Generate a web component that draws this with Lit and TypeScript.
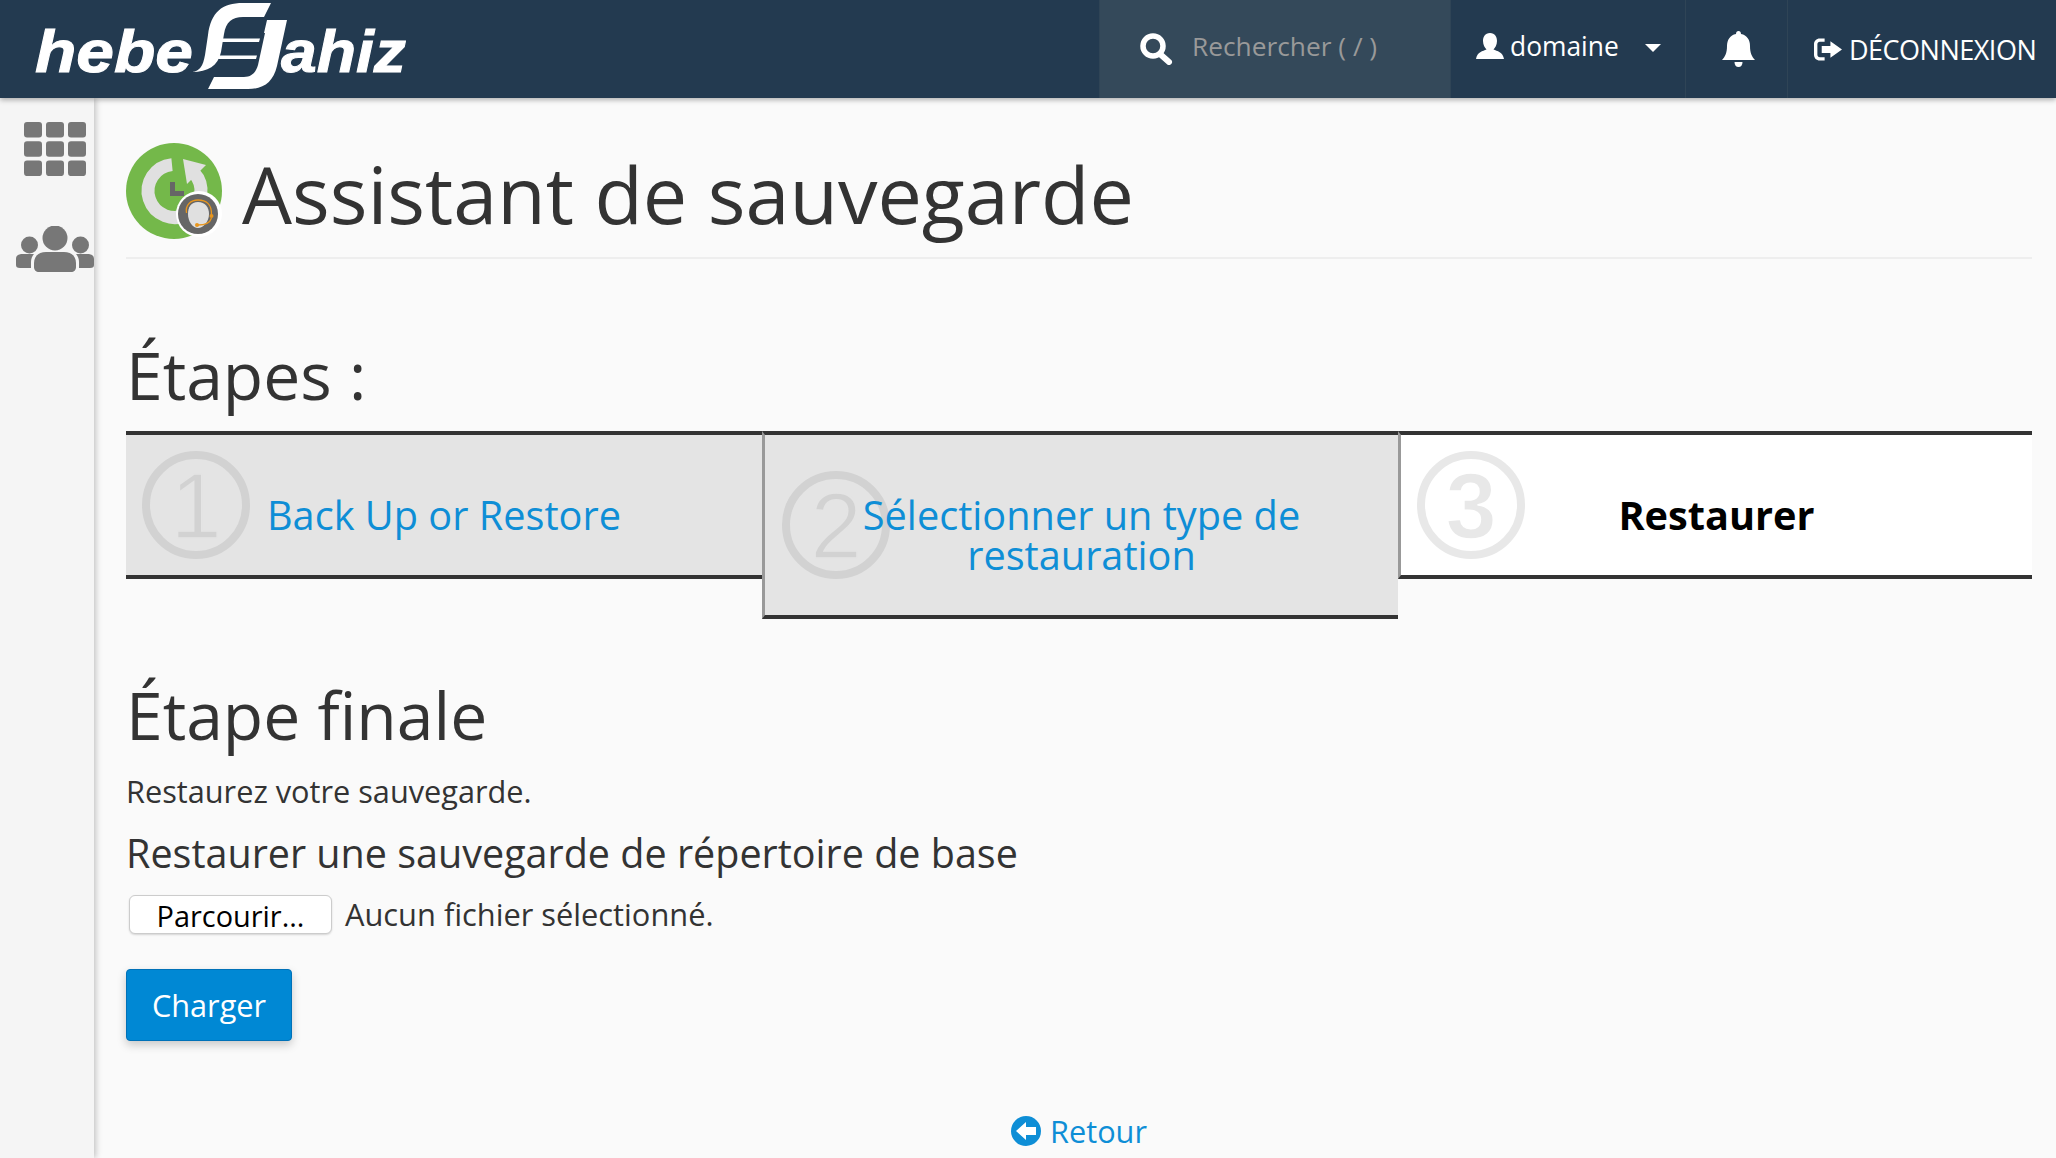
import { css, html, LitElement, svg } from 'lit';
import { customElement } from 'lit/decorators.js';

const stepBadge = (n: number, tone: string, bg: string) => html`
  <svg class="num" width="108" height="108" viewBox="0 0 108 108">
    <circle cx="54" cy="54" r="50" fill="none" stroke=${tone} stroke-width="8" />
    <text x="54" y="87" text-anchor="middle" fill=${tone} stroke=${bg} stroke-width="1.500" paint-order="fill" font-size="92" font-family="Liberation Sans, sans-serif">${n}</text>
  </svg>
`;

@customElement('app-root')
export class AppRoot extends LitElement {
  static override styles = css`
    :host {
      display: block;
      height: 1158px;
      overflow: hidden;
      background: #fafafa;
      font-family: 'Open Sans', sans-serif;
      color: #333;
    }

    .topbar {
      position: relative;
      z-index: 2;
      display: flex;
      align-items: stretch;
      height: 98px;
      background: #233a50;
      box-shadow: 0 2px 5px rgba(0, 0, 0, 0.3);
      color: #fff;
      font-size: 26.400px;
    }

    .logo {
      margin-left: 30px;
      margin-right: auto;
    }

    .search {
      display: flex;
      align-items: center;
      gap: 19px;
      width: 352px;
      box-sizing: border-box;
      padding: 0 0 6px 40px;
      background: #34495a;
      border-right: 1px solid #2f4456;
      border-left: 1px solid #2f4456;
      color: #999;
      font-size: 26.300px;
    }

    .search svg {
      margin-top: 6px;
    }

    .user {
      display: flex;
      align-items: center;
      width: 235px;
      box-sizing: border-box;
      padding: 0 0 6px 25px;
      border-right: 1px solid #2f4456;
      gap: 6px;
    }

    .caret {
      width: 0;
      height: 0;
      margin: 4px 0 0 20px;
      border: 8px solid transparent;
      border-top-color: #fff;
      border-bottom: 0;
    }

    .bell {
      display: flex;
      align-items: center;
      justify-content: center;
      width: 102px;
      box-sizing: border-box;
      padding-left: 3px;
      border-right: 1px solid #2f4456;
    }

    .logout {
      display: flex;
      align-items: center;
      gap: 7px;
      padding-left: 26px;
      width: 268px;
      box-sizing: border-box;
      font-size: 27px;
      letter-spacing: -0.5px;
    }

    .logout svg {
      flex: none;
    }

    .body {
      display: flex;
      height: 1060px;
    }

    .side {
      flex: none;
      width: 94px;
      display: flex;
      flex-direction: column;
      align-items: center;
      gap: 50px;
      padding: 24px 0 0 15px;
      box-sizing: border-box;
      background: #f5f5f5;
      box-shadow: 2px 0 6px rgba(0, 0, 0, 0.22);
    }

    .content {
      flex: 1;
      padding: 45px 24px 0 32px;
      min-width: 0;
    }

    .title {
      display: flex;
      align-items: center;
      gap: 20px;
      padding-bottom: 18px;
      border-bottom: 2px solid #eee;
    }

    h1 {
      margin: 5px 0 0;
      font-size: 79.100px;
      line-height: 91px;
      font-weight: 400;
    }

    .steps-title {
      margin: 70px 0 0;
      font-size: 66px;
      line-height: 90px;
      font-weight: 400;
    }

    .steps {
      display: flex;
      align-items: flex-start;
      margin-top: 12px;
    }

    .step {
      position: relative;
      flex: 0 0 636px;
      box-sizing: border-box;
      padding: 60px 0 40px;
      border-top: 4px solid #333;
      border-bottom: 4px solid #333;
      background: #e4e4e4;
      text-align: center;
      font-size: 39.700px;
      line-height: 40px;
      color: #0e8ed6;
    }

    .step + .step {
      border-left: 3px solid #999;
    }

    .step.second {
      flex-basis: 636px;
    }

    .step.current {
      flex: 1;
      background: #fff;
      color: #000;
      font-weight: 700;
    }

    .step span {
      position: relative;
    }

    .num {
      position: absolute;
      left: 16px;
      top: 16px;
    }

    .step.second .num {
      left: 17px;
      top: 36px;
    }

    h2 {
      margin: 50px 0 0;
      font-size: 66px;
      line-height: 90px;
      font-weight: 400;
    }

    .lead {
      margin: 12px 0 0;
      font-size: 30.700px;
      line-height: 40px;
    }

    h3 {
      margin: 14px 0 0;
      font-size: 39.500px;
      line-height: 56px;
      font-weight: 400;
    }

    .file {
      display: flex;
      align-items: center;
      gap: 13px;
      margin: 12px 0 0 3px;
      font-size: 30.800px;
    }

    .file button {
      width: 203px;
      height: 39px;
      padding: 0 0 2px;
      border: 1px solid #ccc;
      border-radius: 6px;
      background: #fff;
      box-shadow: 0 1px 2px rgba(0, 0, 0, 0.15);
      font: inherit;
      font-size: 28.900px;
      color: #000;
    }

    .send {
      display: block;
      width: 166px;
      height: 72px;
      margin-top: 34px;
      padding: 0;
      border: 1px solid #0071b8;
      border-radius: 4px;
      background: #0088d4;
      box-shadow: 0 4px 10px rgba(0, 0, 0, 0.2);
      color: #fff;
      font: inherit;
      font-size: 30.700px;
    }

    .back {
      display: flex;
      align-items: center;
      justify-content: center;
      gap: 9px;
      margin-top: 69px;
      font-size: 30.700px;
      color: #0e8ed6;
    }
  `;

  private _logo() {
    return html`
      <svg class="logo" width="390" height="98" viewBox="30 0 390 98" fill="#fff">
        <text x="35" y="72" textLength="158" lengthAdjust="spacingAndGlyphs" font-family="Liberation Sans, sans-serif" font-weight="700" font-style="italic" font-size="60" stroke="#fff" stroke-width="1">hebe</text>
        <text x="281" y="72" textLength="125" lengthAdjust="spacingAndGlyphs" font-family="Liberation Sans, sans-serif" font-weight="700" font-style="italic" font-size="60" stroke="#fff" stroke-width="1">ahiz</text>
        <path d="M192 72 C200 71 203 66 205 55 L208 35 C211 12 222 3 243 3 H271 L264 17 H243 C232 17 226 22 224 34 L221 52 C218 66 208 72 192 72 Z" />
        <path d="M264 33 L267 20 H287 L277 66 C273 82 264 89 248 89 H208 L214 77 H244 C252 77 256 72 258 65 L265 33 Z" />
        <path d="M222 38.500 H260 L259 42 H221 Z M219 55.500 H257 L256 59 H218 Z" />
      </svg>
    `;
  }

  private _backupIcon() {
    return html`
      <svg width="96" height="96" viewBox="0 0 96 96" style="flex:none">
        <circle cx="48" cy="48" r="48" fill="#74b84a" />
        <path d="M46 21.600 A26.500 26.500 0 1 0 68 30" fill="none" stroke="#e0e0e0" stroke-width="13" />
        <path d="M57 16 L80 22 L61 41 Z" fill="#e0e0e0" />
        <path d="M44 39 H49 V48 H58 V53 H44 Z" fill="#666" />
        <circle cx="73" cy="71" r="23" fill="#fff" />
        <circle cx="72" cy="71" r="20" fill="#666" />
        <path d="M72 59 C79 59 83 64 83 71 C83 79 77 85 72 85 C67 85 62 79 62 71 C62 64 65 59 72 59 Z" fill="#e0e0e0" />
        <path d="M60.500 70 C59 62 65 57 72 57 C80 57 86 61 85.500 72 M85.500 75 C84 80 78 82 72 82" fill="none" stroke="#e8961e" stroke-width="1.300" />
        <circle cx="85.500" cy="73" r="2" fill="#e8961e" />
        <circle cx="71" cy="82" r="2" fill="#e8961e" />
      </svg>
    `;
  }

  private _grid() {
    const cells = [];
    for (let r = 0; r < 3; r++) {
      for (let c = 0; c < 3; c++) {
        cells.push(svg`<rect x=${c * 22} y=${r * 19.3} width="18" height="15.500" rx="3" />`);
      }
    }
    return html`<svg width="62" height="54" viewBox="0 0 62 54" fill="#777">${cells}</svg>`;
  }

  protected override render() {
    return html`
      <div class="topbar">
        ${this._logo()}
        <div class="search">
          <svg width="33" height="32" viewBox="0 0 33 32" fill="none" stroke="#fff">
            <circle cx="13" cy="13" r="10" stroke-width="5.500" />
            <path d="M20 21 L29 29" stroke-width="6" stroke-linecap="round" />
          </svg>
          <span>Rechercher ( / )</span>
        </div>
        <div class="user">
          <svg width="28" height="26" viewBox="0 0 28 26" fill="#fff">
            <path d="M14 0 C19 0 21 4 21 8 C21 12 19 15 17.500 16.500 C21 18 27 19 28 26 H0 C1 19 7 18 10.500 16.500 C9 15 7 12 7 8 C7 4 9 0 14 0 Z" />
          </svg>
          <span>domaine</span>
          <i class="caret"></i>
        </div>
        <div class="bell">
          <svg width="33" height="36" viewBox="0 0 33 36" fill="#fff">
            <path d="M16.500 0 C18 0 19 1 19 3 C25 4 28 9 28 15 C28 22 30 26 33 29 H0 C3 26 5 22 5 15 C5 9 8 4 14 3 C14 1 15 0 16.500 0 Z" />
            <path d="M12.500 31 H20.500 C20.500 34 19 36 16.500 36 C14 36 12.500 34 12.500 31 Z" />
          </svg>
        </div>
        <div class="logout">
          <svg width="28" height="23" viewBox="0 0 29 23" fill="#fff">
            <path d="M11 0 V3.500 H6 C4.500 3.500 3.500 4.500 3.500 6 V17 C3.500 18.500 4.500 19.500 6 19.500 H11 V23 H6 C2.500 23 0 20.500 0 17 V6 C0 2.500 2.500 0 6 0 Z" />
            <path d="M17 3 L29 11.500 L17 20 V15 H8 V8 H17 Z" />
          </svg>
          <span>DÉCONNEXION</span>
        </div>
      </div>

      <div class="body">
        <nav class="side">
          ${this._grid()}
          <svg width="78" height="46" viewBox="0 0 78 46" fill="#777">
            <circle cx="39" cy="12" r="12.500" />
            <path d="M18 37 C18 30 23 26 30 26 H48 C55 26 60 30 60 37 V41 C60 44 58 46 55 46 H23 C20 46 18 44 18 41 Z" />
            <circle cx="13.500" cy="19" r="8.500" />
            <circle cx="64.500" cy="19" r="8.500" />
            <path d="M0 33 C0 29 3 28 7 28 H18 C16 30 15 33 15 36 V42 H4 C1 42 0 41 0 39 Z" />
            <path d="M78 33 C78 29 75 28 71 28 H60 C62 30 63 33 63 36 V42 H74 C77 42 78 41 78 39 Z" />
          </svg>
        </nav>

        <main class="content">
          <div class="title">
            ${this._backupIcon()}
            <h1>Assistant de sauvegarde</h1>
          </div>

          <div class="steps-title">Étapes :</div>
          <div class="steps">
            <div class="step">${stepBadge(1, '#d2d2d2', '#e4e4e4')}<span>Back Up or Restore</span></div>
            <div class="step second">${stepBadge(2, '#d2d2d2', '#e4e4e4')}<span>Sélectionner un type de restauration</span></div>
            <div class="step current">${stepBadge(3, '#e8e8e8', '#fff')}<span>Restaurer</span></div>
          </div>

          <h2>Étape finale</h2>
          <p class="lead">Restaurez votre sauvegarde.</p>
          <h3>Restaurer une sauvegarde de répertoire de base</h3>
          <div class="file">
            <button>Parcourir...</button>
            <span>Aucun fichier sélectionné.</span>
          </div>
          <button class="send">Charger</button>

          <div class="back">
            <svg width="30" height="30" viewBox="0 0 30 30">
              <circle cx="15" cy="15" r="15" fill="#0e8ed6" />
              <path d="M5 15 L15 6 V11 H25 V19 H15 V24 Z" fill="#fff" />
            </svg>
            <span>Retour</span>
          </div>
        </main>
      </div>
    `;
  }
}
